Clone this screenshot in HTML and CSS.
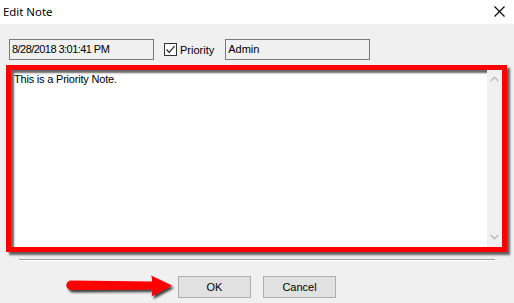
FILE: index.html
```html
<!DOCTYPE html>
<html>
<head>
<meta charset="utf-8">
<link rel="stylesheet" href="styles.css">
</head>
<body>
<div class="dialog">
  <div class="titlebar">
    <span class="title">Edit Note</span>
    <svg class="close" width="11" height="11" viewBox="0 0 11 11"><path d="M0.5 0.5 L10.5 10.5 M10.5 0.5 L0.5 10.5" stroke="#000" stroke-width="1.1" fill="none"/></svg>
  </div>
  <div class="body">
    <div class="toprow">
      <div class="field date">8/28/2018 3:01:41 PM</div>
      <label class="check">
        <span class="box"><svg width="11" height="11" viewBox="0 0 11 11"><path d="M1.5 5.5 L4.2 8.3 L9.6 2.2" stroke="#222" stroke-width="1.2" fill="none"/></svg></span>
        <span class="checklabel">Priority</span>
      </label>
      <div class="field user">Admin</div>
    </div>
    <div class="memo">
      <div class="memotext">This is a Priority Note.</div>
      <div class="scrollbar">
        <svg width="9" height="6" viewBox="0 0 9 6"><path d="M0.8 5 L4.5 1.3 L8.2 5" stroke="#bcbcbc" stroke-width="1.6" fill="none"/></svg>
        <svg width="9" height="6" viewBox="0 0 9 6"><path d="M0.8 1 L4.5 4.7 L8.2 1" stroke="#bcbcbc" stroke-width="1.6" fill="none"/></svg>
      </div>
    </div>
    <div class="separator"></div>
    <div class="buttons">
      <svg class="arrow" width="112" height="28" viewBox="0 0 112 28">
        <defs>
          <filter id="sh" x="-10%" y="-30%" width="130%" height="180%">
            <feDropShadow dx="2" dy="2.5" stdDeviation="1.3" flood-color="#000" flood-opacity="0.75"/>
          </filter>
        </defs>
        <path d="M7 7.5 L88 8.5 Q88.5 5 87 2.5 L108 12.5 L87.5 23.5 Q88.5 20 88 16.5 L7 17 A4.75 4.75 0 0 1 7 7.5 Z" fill="#ff0000" filter="url(#sh)"/>
      </svg>
      <div class="btn">OK</div>
      <div class="btn">Cancel</div>
    </div>
  </div>
</div>
</body>
</html>
```
FILE: styles.css
```css
html, body {
  margin: 0;
  padding: 0;
}
body {
  width: 514px;
  height: 303px;
  overflow: hidden;
  background: #f0f0f0;
  font-family: "Liberation Sans", Arial, sans-serif;
  font-size: 11px;
  color: #000;
}
.dialog {
  width: 514px;
  height: 303px;
  display: flex;
  flex-direction: column;
}
.titlebar {
  height: 24px;
  background: #fff;
  display: flex;
  align-items: center;
  justify-content: space-between;
  padding: 0 9px 2px 3px;
  box-sizing: border-box;
}
.title {
  font-family: "Noto Sans", "Open Sans", sans-serif;
  font-size: 11.4px;
  color: #000;
}
.close {
  display: block;
  margin-top: 1px;
}
.body {
  display: flex;
  flex-direction: column;
  padding-top: 15px;
}
.toprow {
  display: flex;
  align-items: center;
  height: 21px;
  padding-left: 9px;
}
.field {
  width: 145px;
  height: 21px;
  box-sizing: border-box;
  border: 1px solid #7a7a7a;
  background: #f0f0f0;
  padding-left: 2px;
  line-height: 19px;
  white-space: nowrap;
}
.date {
  letter-spacing: -0.55px;
}
.check {
  display: flex;
  align-items: center;
  margin-left: 10px;
  margin-right: 11px;
}
.box {
  width: 13px;
  height: 13px;
  box-sizing: border-box;
  border: 1px solid #333;
  background: #fff;
  display: flex;
  align-items: center;
  justify-content: center;
}
.box svg {
  display: block;
}
.checklabel {
  margin-left: 3px;
}
.memo {
  margin-top: 5px;
  margin-left: 6px;
  width: 501px;
  height: 187px;
  box-sizing: border-box;
  border: 5px solid #ff0000;
  box-shadow: 3px 3px 2px rgba(0, 0, 0, 0.6), inset 3px 3px 2px rgba(0, 0, 0, 0.6);
  display: flex;
  background: #fff;
}
.memotext {
  flex: 1;
  padding: 2px 0 0 3px;
  line-height: 14px;
  letter-spacing: -0.2px;
}
.scrollbar {
  width: 15px;
  background: #f0f0f0;
  display: flex;
  flex-direction: column;
  justify-content: space-between;
  align-items: center;
  padding: 6px 0 7px;
}
.scrollbar svg {
  display: block;
}
.separator {
  margin: 7px 19px 0;
  height: 0;
  border-top: 1px solid #a0a0a0;
  border-bottom: 1px solid #ffffff;
  width: 476px;
}
.buttons {
  display: flex;
  align-items: center;
  margin-top: 11px;
  padding-left: 64px;
}
.arrow {
  display: block;
  margin-right: 2px;
  margin-top: 1px;
}
.btn {
  width: 73px;
  height: 22px;
  box-sizing: border-box;
  border: 1px solid #adadad;
  background: #e1e1e1;
  display: flex;
  align-items: center;
  justify-content: center;
  margin-right: 12px;
}
```
